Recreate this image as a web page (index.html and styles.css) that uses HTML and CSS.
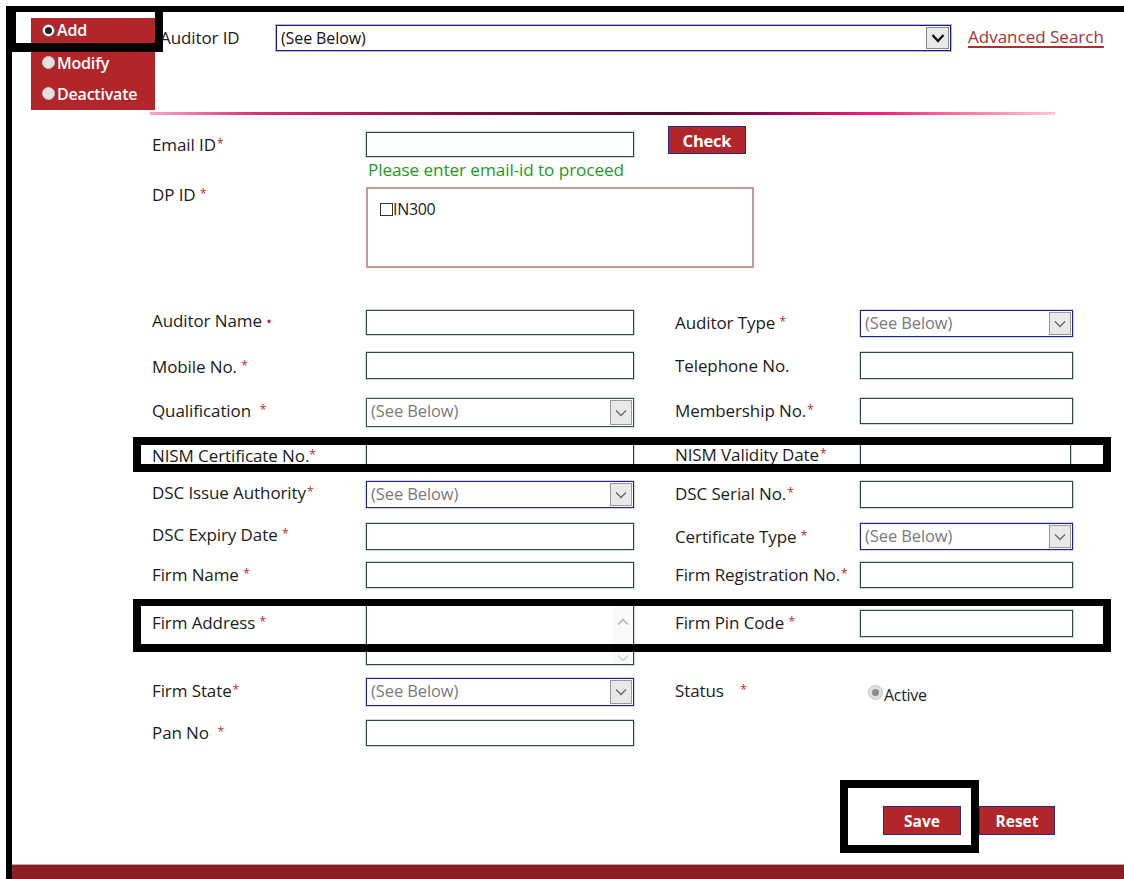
FILE: index.html
```html
<!DOCTYPE html>
<html lang="en">
<head>
<meta charset="utf-8">
<title>Auditor Master</title>
<link rel="stylesheet" href="styles.css">
</head>
<body>
<div class="frame">
  <header class="top">
    <div class="mode-panel">
      <div class="mode first"><span class="radio on"></span>Add</div>
      <div class="mode second"><span class="radio"></span>Modify</div>
      <div class="mode"><span class="radio"></span>Deactivate</div>
    </div>
    <span class="top-label">Auditor ID</span>
    <div class="select select-main">
      <span class="sel-text">(See Below)</span>
      <span class="drop drop-main"><svg width="14" height="10" viewBox="0 0 14 10"><polyline points="1.5,2 7,8 12.5,2" fill="none" stroke="#111" stroke-width="2.2"/></svg></span>
    </div>
    <a class="adv" href="#">Advanced Search</a>
  </header>

  <div class="rule"></div>

  <section class="email-block">
    <label class="lbl email-lbl">Email ID<span class="req tight">*</span></label>
    <div class="input email-input"></div>
    <button class="btn check">Check</button>
    <span class="hint">Please enter email-id to proceed</span>
    <label class="lbl dp-lbl">DP ID <span class="req">*</span></label>
    <div class="dp-box">
      <span class="chk"></span><span class="dp-text">IN300</span>
    </div>
  </section>

  <section class="form-grid">
    <!-- row 1 -->
    <label class="lbl up1">Auditor Name <span class="req dot">•</span></label>
    <div class="input"></div>
    <label class="lbl rcol">Auditor Type <span class="req">*</span></label>
    <div class="select navy h27"><span class="sel-text grey">(See Below)</span><span class="drop"><svg width="12" height="8" viewBox="0 0 12 8"><polyline points="1,1.5 6,6.5 11,1.5" fill="none" stroke="#666" stroke-width="1.3"/></svg></span></div>

    <!-- row 2 -->
    <label class="lbl down2">Mobile No. <span class="req">*</span></label>
    <div class="input h27"></div>
    <label class="lbl rcol down2">Telephone No.</label>
    <div class="input h27"></div>

    <!-- row 3 -->
    <label class="lbl">Qualification &nbsp;<span class="req">*</span></label>
    <div class="select slate h29"><span class="sel-text grey">(See Below)</span><span class="drop"><svg width="12" height="8" viewBox="0 0 12 8"><polyline points="1,1.5 6,6.5 11,1.5" fill="none" stroke="#666" stroke-width="1.3"/></svg></span></div>
    <label class="lbl rcol">Membership No.<span class="req tight">*</span></label>
    <div class="input h26"></div>

    <!-- row 4 -->
    <label class="lbl">NISM Certificate No.<span class="req">*</span></label>
    <div class="input h24"></div>
    <label class="lbl rcol up1">NISM Validity Date<span class="req tight">*</span></label>
    <div class="input h26 narrow"></div>

    <!-- row 5 -->
    <label class="lbl up1">DSC Issue Authority<span class="req tight">*</span></label>
    <div class="select navy h27"><span class="sel-text grey">(See Below)</span><span class="drop"><svg width="12" height="8" viewBox="0 0 12 8"><polyline points="1,1.5 6,6.5 11,1.5" fill="none" stroke="#666" stroke-width="1.3"/></svg></span></div>
    <label class="lbl rcol">DSC Serial No.<span class="req tight">*</span></label>
    <div class="input h27"></div>

    <!-- row 6 -->
    <label class="lbl">DSC Expiry Date <span class="req">*</span></label>
    <div class="input h27 down1"></div>
    <label class="lbl rcol down2">Certificate Type <span class="req">*</span></label>
    <div class="select navy h27 down1"><span class="sel-text grey">(See Below)</span><span class="drop"><svg width="12" height="8" viewBox="0 0 12 8"><polyline points="1,1.5 6,6.5 11,1.5" fill="none" stroke="#666" stroke-width="1.3"/></svg></span></div>

    <!-- row 7 -->
    <label class="lbl">Firm Name <span class="req">*</span></label>
    <div class="input h26"></div>
    <label class="lbl rcol">Firm Registration No.<span class="req tight">*</span></label>
    <div class="input h26"></div>

    <!-- row 8 -->
    <label class="lbl lbl-top">Firm Address <span class="req">*</span></label>
    <div class="textarea">
      <span class="scroll">
        <svg width="12" height="8" viewBox="0 0 12 8"><polyline points="1,6.5 6,1.5 11,6.5" fill="none" stroke="#aaa" stroke-width="1.3"/></svg>
        <svg width="12" height="8" viewBox="0 0 12 8"><polyline points="1,1.5 6,6.5 11,1.5" fill="none" stroke="#ccc" stroke-width="1.3"/></svg>
      </span>
    </div>
    <label class="lbl rcol pin-lbl">Firm Pin Code <span class="req">*</span></label>
    <div class="input h27 pin"></div>

    <!-- row 9 -->
    <label class="lbl">Firm State<span class="req tight">*</span></label>
    <div class="select navy h28"><span class="sel-text grey">(See Below)</span><span class="drop"><svg width="12" height="8" viewBox="0 0 12 8"><polyline points="1,1.5 6,6.5 11,1.5" fill="none" stroke="#666" stroke-width="1.3"/></svg></span></div>
    <label class="lbl rcol status-lbl">Status <span class="req far">*</span></label>
    <div class="status"><span class="radio dis"></span>Active</div>

    <!-- row 10 -->
    <label class="lbl">Pan No &nbsp;<span class="req">*</span></label>
    <div class="input h26"></div>
  </section>

  <div class="actions">
    <button class="btn save">Save</button>
    <button class="btn reset">Reset</button>
  </div>

  <footer class="foot"></footer>

  <!-- highlight frames drawn over the form -->
  <div class="mark mark-add"></div>
  <div class="mark mark-nism"></div>
  <div class="mark mark-firm"></div>
  <div class="mark mark-save"></div>
</div>
</body>
</html>
```

FILE: styles.css
```css
* { box-sizing: border-box; }

html, body {
  margin: 0;
  padding: 0;
  background: #fff;
}

body {
  font-family: "Open Sans", "Noto Sans", "Liberation Sans", sans-serif;
  font-size: 17px;
  color: #1c1c1c;
  width: 1124px;
  height: 879px;
  overflow: hidden;
}

.frame {
  position: relative;
  margin: 6px 0 0 6px;
  height: 873px;
  border-top: 6px solid #000;
  border-left: 6px solid #000;
  display: flex;
  flex-direction: column;
}

/* ---------- header ---------- */
.top {
  display: flex;
  align-items: flex-start;
  height: 98px;
}

.mode-panel {
  margin: 6px 0 0 19px;
  width: 124px;
  height: 92px;
  background: #b2262a;
  padding-left: 11px;
  color: #fff;
  font-weight: 600;
  font-size: 16px;
}

.mode {
  display: flex;
  align-items: center;
  height: 31px;
  letter-spacing: -0.2px;
}
.mode.first { height: 24px; }
.mode.second { margin-top: 5px; }

.radio {
  width: 13px;
  height: 13px;
  border-radius: 50%;
  background: #e2e2e2;
  border: 1px solid #c8c8c8;
  margin-right: 2px;
  flex: none;
  position: relative;
}
.radio.on {
  background: #fff;
  border: 1px solid #777;
}
.radio.on::after {
  content: "";
  position: absolute;
  left: 2px;
  top: 2px;
  width: 7px;
  height: 7px;
  border-radius: 50%;
  background: #222;
}

.top-label {
  margin: 13px 0 0 5px;
  width: 116px;
  line-height: 26px;
  font-size: 17px;
  letter-spacing: -0.1px;
}

.select {
  display: flex;
  align-items: stretch;
  background: #fff;
  border: 1px solid #1f1f8a;
  width: 268px;
  height: 27px;
}
.select.navy { border: 1px solid #23238e; box-shadow: 0 0 0 0.5px rgba(35,35,142,0.4); }
.select.slate { border: 1px solid #3a5450; box-shadow: 0 0 0 0.5px rgba(58,84,80,0.4); }

.select-main {
  margin-top: 13px;
  width: 675px;
  height: 26px;
  border: 1px solid #1a1a80;
  box-shadow: 0 0 0 1px rgba(40,40,150,0.35);
}

.sel-text {
  flex: 1;
  padding-left: 4px;
  font-size: 16px;
  line-height: 24px;
  color: #111;
  white-space: nowrap;
  letter-spacing: -0.1px;
}
.sel-text.grey { color: #7a7a7a; font-size: 16.5px; }

.drop {
  width: 22px;
  margin: 1px;
  background: #e9e9e9;
  border: 1px solid #9a9a9a;
  display: flex;
  align-items: center;
  justify-content: center;
}
.drop-main {
  width: 23px;
  border-color: #8a8a8a;
}

.adv {
  margin: 12px 0 0 17px;
  line-height: 26px;
  font-size: 17px;
  color: #a83232;
  text-decoration: underline;
  text-underline-offset: 3px;
  text-decoration-thickness: 2px;
}

.rule {
  margin: 2px 0 0 138px;
  width: 905px;
  height: 3px;
  background: linear-gradient(to right, #f7a8c8 0%, #d8306e 12%, #7a1040 35%, #4a0a2c 58%, #8a0c48 68%, #ff1a78 80%, #ff78a8 90%, #ffc6d8 100%);
}

/* ---------- email / dp ---------- */
.email-block {
  margin-top: 11px;
  padding-left: 140px;
  display: grid;
  grid-template-columns: 214px 268px 112px;
  grid-template-rows: 31px 26px 85px;
  align-items: start;
}

.lbl {
  line-height: 25px;
  font-size: 17px;
  white-space: nowrap;
  letter-spacing: -0.1px;
}

.req {
  color: #c3262b;
  font-size: 12px;
  vertical-align: 3px;
}
.req.tight { margin-left: 1px; }
.req.dot { font-size: 15px; vertical-align: 0; }
.req.far { margin-left: 12px; }

.email-lbl { margin-top: 5px; }

.input {
  width: 268px;
  height: 25px;
  background: #fff;
  border: 1px solid #2f4845;
  box-shadow: 0 0 0 0.5px rgba(47,72,69,0.45);
}
.email-input { margin-top: 6px; }

.btn {
  font-family: "Open Sans", "Liberation Sans", sans-serif;
  font-weight: 700;
  font-size: 15.5px;
  color: #fff;
  background: #b2262a;
  border: 1px solid #28288f;
  padding: 0;
  cursor: pointer;
}

.check {
  margin-left: 34px;
  width: 78px;
  height: 28px;
  font-size: 16.5px;
  letter-spacing: -0.2px;
}

.hint {
  grid-column: 2 / 4;
  margin-left: 2px;
  line-height: 26px;
  color: #1f9a22;
  font-size: 17.2px;
  letter-spacing: -0.1px;
  white-space: nowrap;
}

.dp-lbl { margin-top: 0; line-height: 22px; }

.dp-box {
  grid-column: 2 / 4;
  margin-top: 4px;
  width: 388px;
  height: 81px;
  border: 2px solid #c39b9b;
  padding: 10px 0 0 12px;
  display: flex;
  align-items: flex-start;
}

.chk {
  width: 13px;
  height: 13px;
  border: 1px solid #333;
  margin-top: 4px;
  background: #fff;
  flex: none;
}
.dp-text {
  font-size: 16px;
  line-height: 20px;
  letter-spacing: -0.3px;
}

/* ---------- main form ---------- */
.form-grid {
  margin-top: 42px;
  padding-left: 140px;
  display: grid;
  grid-template-columns: 214px 268px 41px 185px 212px;
  grid-template-rows: 42px 46px 45px 38px 41px 40px 43px 73px 42px 26px;
  align-items: start;
}

.form-grid > .lbl:nth-child(4n+1) { grid-column: 1; }
.form-grid > .rcol { grid-column: 4; }
.form-grid > .rcol + * { grid-column: 5; width: 213px; }

.h24 { height: 24px; }
.h26 { height: 26px; }
.h27 { height: 27px; }
.h28 { height: 28px; }
.h29 { height: 29px; }
.narrow { width: 211px !important; }
.down1 { margin-top: 1px; }
.down2 { margin-top: 2px; }
.up1 { margin-top: -1px; }

.form-grid .lbl { line-height: 24px; }

.lbl-top { margin-top: 5px; }
.pin-lbl { margin-top: 5px; }
.pin { margin-top: 5px; }

.textarea {
  width: 268px;
  height: 60px;
  border: 1px solid #2f4845;
  box-shadow: 0 0 0 0.5px rgba(47,72,69,0.45);
  display: flex;
  justify-content: flex-end;
}
.scroll {
  width: 20px;
  display: flex;
  flex-direction: column;
  justify-content: space-between;
  align-items: center;
  padding: 12px 0 2px;
  background: #fafafa;
}

.status {
  display: flex;
  align-items: center;
  margin: 6px 0 0 8px;
  font-size: 16px;
  letter-spacing: -0.3px;
  line-height: 22px;
  color: #222;
}
.radio.dis {
  width: 15px;
  height: 15px;
  background: #e0e0e0;
  border: 1px solid #c4c4c4;
  margin-right: 1px;
  margin-top: -6px;
}
.radio.dis::after {
  content: "";
  position: absolute;
  left: 3px;
  top: 3px;
  width: 7px;
  height: 7px;
  border-radius: 50%;
  background: #8a8a8a;
}

/* ---------- buttons ---------- */
.actions {
  margin: 60px 0 0 871px;
  display: flex;
  gap: 18px;
}
.save { width: 78px; height: 29px; }
.reset { width: 76px; height: 29px; }

/* ---------- footer ---------- */
.foot {
  margin-top: auto;
  height: 15px;
  margin-right: -6px;
  background: #8c1f23;
  border-top: 1px solid #caa3a3;
}

/* ---------- highlight frames ---------- */
.mark {
  position: absolute;
  border: 8px solid #000;
  pointer-events: none;
}
.mark-add {
  left: 0;
  top: -6px;
  width: 151px;
  height: 46px;
  border-width: 6px 8px 9px 4px;
}
.mark-nism {
  left: 121px;
  top: 425px;
  width: 978px;
  height: 35px;
}
.mark-firm {
  left: 121px;
  top: 587px;
  width: 978px;
  height: 53px;
  border-width: 7px 8px 8px 8px;
}
.mark-save {
  left: 828px;
  top: 768px;
  width: 139px;
  height: 73px;
}
```
